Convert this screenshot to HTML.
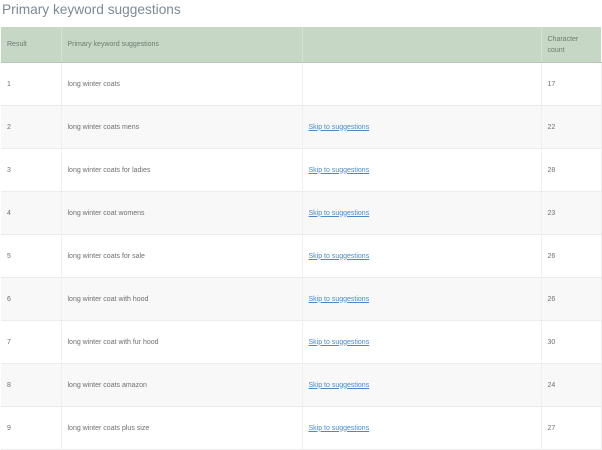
<!DOCTYPE html>
<html><head><meta charset="utf-8"><style>
body{margin:0;width:602px;height:450px;background:#fff;font-family:"Liberation Sans",sans-serif;overflow:hidden;position:relative}
h1{position:absolute;left:2px;top:2px;margin:0;font-weight:normal;font-size:13.7px;color:#7d8a96}
table{position:absolute;left:1px;top:27px;width:600px;border-collapse:collapse;table-layout:fixed}
th{background:#c6d7c6;color:#6f7b6f;font-weight:normal;font-size:7px;text-align:left;height:35px;padding:0 0 0 6px;border-right:1px solid #d5e2d5;border-bottom:1px solid #b7c9b7;line-height:11px}
td{height:42px;font-size:7px;color:#6f6f6f;padding:0 0 0 6px;border-right:1px solid #efefef;border-bottom:1px solid #ececec}
tr:nth-child(odd) td{background:#f8f8f8}
a{color:#4a8ac8;text-decoration:underline}
</style></head><body>
<h1>Primary keyword suggestions</h1>
<table>
<colgroup><col style="width:60px"><col style="width:241px"><col style="width:239px"><col style="width:60px"></colgroup>
<tr><th>Result</th><th>Primary keyword suggestions</th><th></th><th style="border-right:0">Character<br>count</th></tr>
<tr><td>1</td><td>long winter coats</td><td></td><td>17</td></tr>
<tr><td>2</td><td>long winter coats mens</td><td><a>Skip to suggestions</a></td><td>22</td></tr>
<tr><td>3</td><td>long winter coats for ladies</td><td><a>Skip to suggestions</a></td><td>28</td></tr>
<tr><td>4</td><td>long winter coat womens</td><td><a>Skip to suggestions</a></td><td>23</td></tr>
<tr><td>5</td><td>long winter coats for sale</td><td><a>Skip to suggestions</a></td><td>26</td></tr>
<tr><td>6</td><td>long winter coat with hood</td><td><a>Skip to suggestions</a></td><td>26</td></tr>
<tr><td>7</td><td>long winter coat with fur hood</td><td><a>Skip to suggestions</a></td><td>30</td></tr>
<tr><td>8</td><td>long winter coats amazon</td><td><a>Skip to suggestions</a></td><td>24</td></tr>
<tr><td>9</td><td>long winter coats plus size</td><td><a>Skip to suggestions</a></td><td>27</td></tr>
</table>
</body></html>
